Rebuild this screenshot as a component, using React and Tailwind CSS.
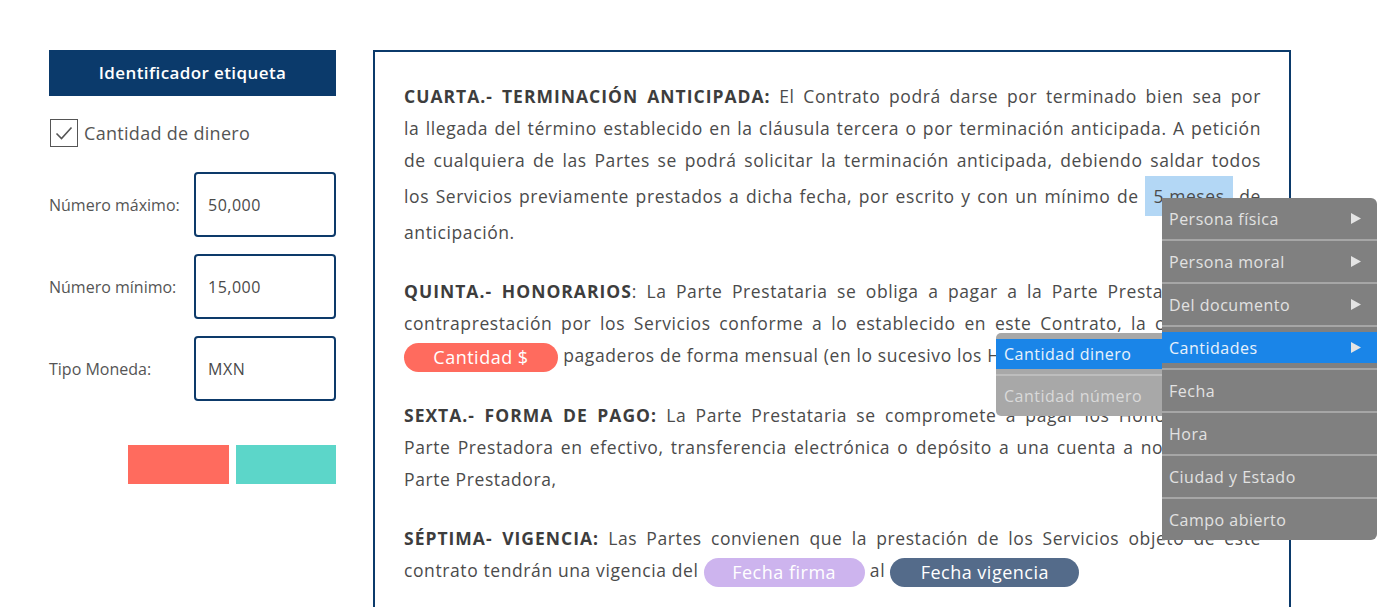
import { useState } from 'react';

const lineCls = 'h-[32px] leading-[32px] whitespace-nowrap text-justify [text-align-last:justify] [word-spacing:-3px]';
const lastLineCls = 'h-[32px] leading-[32px] whitespace-nowrap';
const boldCls = 'font-bold tracking-[1px] text-[#3d3d3d]';

function Pill({ children, className }) {
  return (
    <span className={`inline-block h-[29px] rounded-full text-center align-middle text-[18px] font-medium leading-[29px] tracking-[0.5px] text-white [word-spacing:0px] ${className}`}>
      {children}
    </span>
  );
}

function Arrow() {
  return (
    <svg width="10" height="11" viewBox="0 0 10 11">
      <polygon points="0,0 10,5.5 0,11" fill="#e4e4e4" />
    </svg>
  );
}

function MenuItem({ label, arrow, active, first }) {
  return (
    <div className={first ? 'py-[5px]' : 'border-t-2 border-[#a6a6a6] py-[5px]'}>
      <div
        className={
          active
            ? 'flex h-[31px] items-center justify-between bg-[#1a85e8] pl-[7px] pr-[16px] text-[#e8f2fc]'
            : 'flex h-[31px] items-center justify-between pl-[7px] pr-[16px] text-[#e2e2e2]'
        }
      >
        <span>{label}</span>
        {arrow && <Arrow />}
      </div>
    </div>
  );
}

const menuItems = [
  { label: 'Persona física', arrow: true },
  { label: 'Persona moral', arrow: true },
  { label: 'Del documento', arrow: true },
  { label: 'Cantidades', arrow: true, active: true },
  { label: 'Fecha' },
  { label: 'Hora' },
  { label: 'Ciudad y Estado' },
  { label: 'Campo abierto' },
];

function Field({ label, value }) {
  return (
    <div className="flex items-center">
      <span className="w-[145px] text-[16px] text-[#555]">{label}</span>
      <div className="flex h-[65px] w-[142px] items-center rounded-[4px] border-[2.5px] border-[#0d3a6a] pl-[12px] text-[16px] tracking-[0.5px] text-[#4a4a4a]">
        {value}
      </div>
    </div>
  );
}

export default function App() {
  const [checked, setChecked] = useState(true);

  return (
    <div className="relative h-[607px] w-[1400px] overflow-hidden bg-white" style={{ fontFamily: '"Open Sans", "Noto Sans", sans-serif' }}>
      <div className="flex gap-[37px] pl-[49px] pt-[50px]">
        {/* left panel */}
        <div className="flex w-[287px] flex-col">
          <div className="flex h-[46px] items-center justify-center bg-[#0b3a6b] text-[17px] font-semibold tracking-[0.4px] text-white">
            Identificador etiqueta
          </div>
          <label className="mt-[23px] flex items-center gap-[6px] pl-[1px]">
            <button
              onClick={() => setChecked(!checked)}
              className="flex h-[28px] w-[28px] items-center justify-center border-[1.5px] border-[#555] bg-white"
            >
              {checked && (
                <svg width="18" height="14" viewBox="0 0 18 14">
                  <path d="M1.5 7.5 L6.5 12.5 L16.5 1.5" fill="none" stroke="#555" strokeWidth="1.6" />
                </svg>
              )}
            </button>
            <span className="text-[18px] tracking-[0.3px] text-[#555]">Cantidad de dinero</span>
          </label>
          <div className="mt-[25px] flex flex-col gap-[17px]">
            <Field label="Número máximo:" value="50,000" />
            <Field label="Número mínimo:" value="15,000" />
            <Field label="Tipo Moneda:" value="MXN" />
          </div>
          <div className="mt-[44px] flex justify-end gap-[7px]">
            <button className="h-[39px] w-[101px] bg-[#ff6b5e]" />
            <button className="h-[39px] w-[100px] bg-[#5cd6c9]" />
          </div>
        </div>

        {/* document */}
        <div className="h-[620px] w-[918px] border-2 border-[#0b3a6b] pl-[29px] pr-[28px] pt-[28px] text-[17.5px] tracking-[0.6px] text-[#4b4b4b]">
          <div>
            <div className={lineCls}>
              <b className={boldCls}>CUARTA.- TERMINACIÓN ANTICIPADA:</b> El Contrato podrá darse por terminado bien sea por
            </div>
            <div className={lineCls}>
              la llegada del término establecido en la cláusula tercera o por terminación anticipada. A petición
            </div>
            <div className={lineCls}>
              de cualquiera de las Partes se podrá solicitar la terminación anticipada, debiendo saldar todos
            </div>
            <div className="h-[40px] leading-[40px] whitespace-nowrap text-justify [text-align-last:justify] [word-spacing:-3px]">
              los Servicios previamente prestados a dicha fecha, por escrito y con un mínimo de{' '}
              <span className="inline-block bg-[#b3d7f5] px-[8px] [word-spacing:0px]">5 meses</span> de
            </div>
            <div className={lastLineCls}>anticipación.</div>
          </div>

          <div className="mt-[27px]">
            <div className={lineCls}>
              <b className={boldCls}>QUINTA.- HONORARIOS</b>: La Parte Prestataria se obliga a pagar a la Parte Prestadora como
            </div>
            <div className={lineCls}>
              contraprestación por los Servicios conforme a lo establecido en este Contrato, la cantidad de
            </div>
            <div className={lastLineCls}>
              <Pill className="w-[154px] bg-[#ff6b5e]">Cantidad $</Pill> pagaderos de forma mensual (en lo sucesivo los Honorarios).
            </div>
          </div>

          <div className="mt-[28px]">
            <div className={lineCls}>
              <b className={boldCls}>SEXTA.- FORMA DE PAGO:</b> La Parte Prestataria se compromete a pagar los Honorarios a la
            </div>
            <div className={lineCls}>
              Parte Prestadora en efectivo, transferencia electrónica o depósito a una cuenta a nombre de la
            </div>
            <div className={lastLineCls}>Parte Prestadora,</div>
          </div>

          <div className="mt-[27px]">
            <div className={lineCls}>
              <b className={boldCls}>SÉPTIMA- VIGENCIA:</b> Las Partes convienen que la prestación de los Servicios objeto de este
            </div>
            <div className={lastLineCls}>
              contrato tendrán una vigencia del <Pill className="w-[161px] bg-[#cdb4ee]">Fecha firma</Pill> al{' '}
              <Pill className="w-[189px] bg-[#546b8a]">Fecha vigencia</Pill>
            </div>
          </div>
        </div>
      </div>

      {/* context menu */}
      <div className="absolute left-[1162px] top-[198px] w-[215px] rounded-r-[6px] bg-[#808080] text-[16px] tracking-[0.5px]">
        {menuItems.map((item, i) => (
          <MenuItem key={item.label} {...item} first={i === 0} />
        ))}
      </div>
      <div className="absolute left-[996px] top-[333px] w-[166px] rounded-l-[5px] bg-[#a8a8a8] text-[16px] tracking-[0.5px]">
        <div className="pb-[5px] pt-[6px]">
          <div className="flex h-[30px] items-center bg-[#1a85e8] pl-[8px] text-[#e8f2fc]">Cantidad dinero</div>
        </div>
        <div className="border-t-2 border-[#bdbdbd] py-[5px]">
          <div className="flex h-[30px] items-center pl-[8px] text-[#dadada]">Cantidad número</div>
        </div>
      </div>
    </div>
  );
}
